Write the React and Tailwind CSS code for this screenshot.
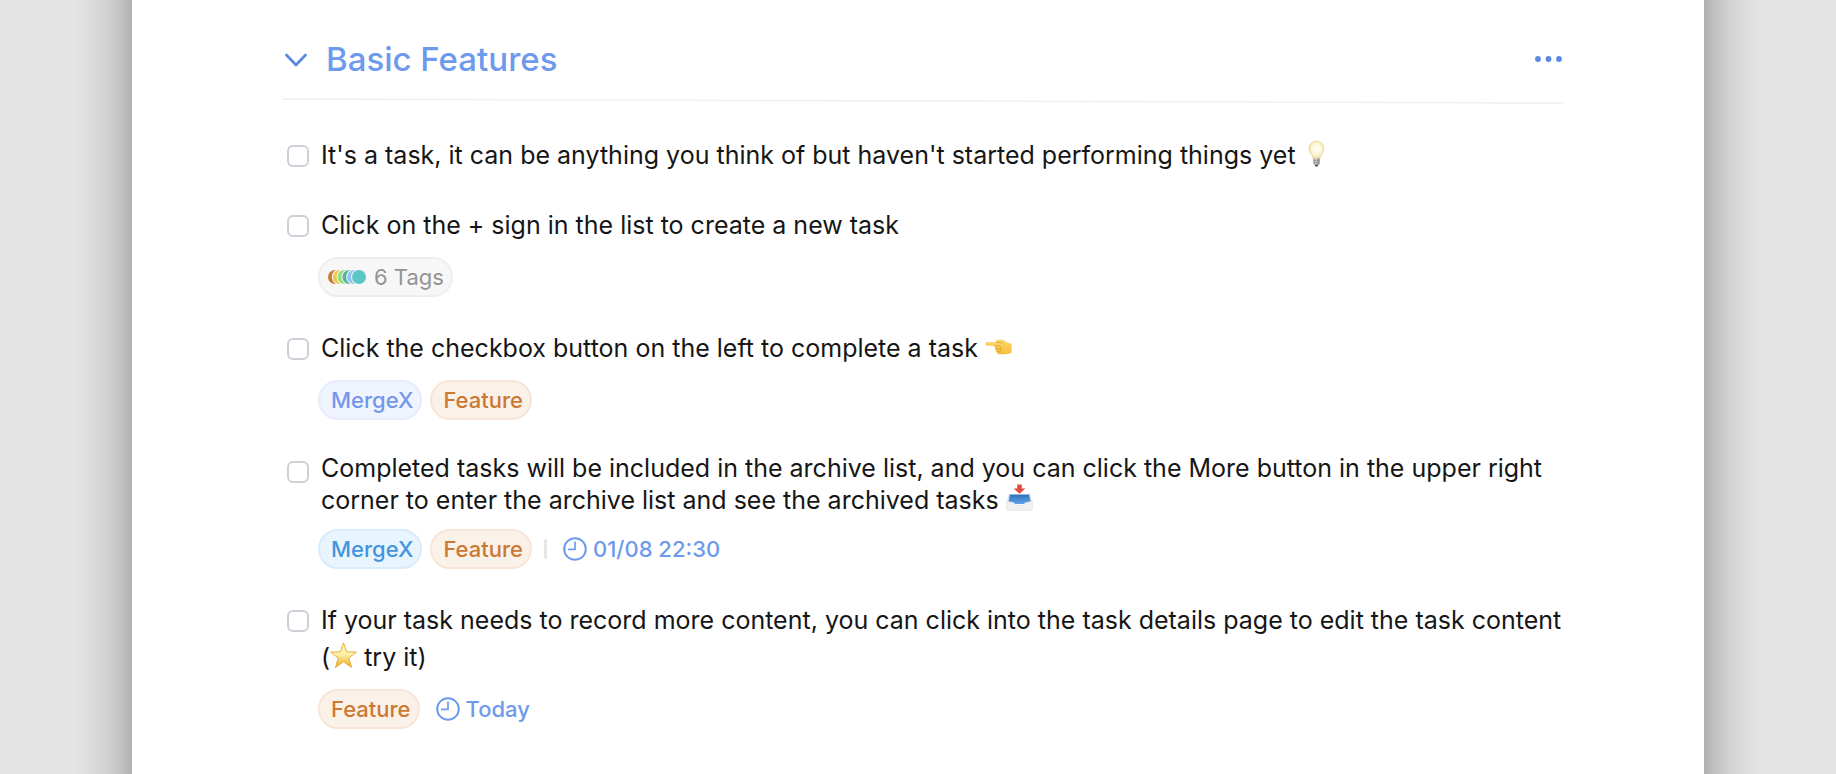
const tones = {
  blue: "bg-[#f0f4fe] border-[#e5ecfd] text-[#7397ea]",
  sky: "bg-[#e8f4fe] border-[#d8ecfb] text-[#4494df]",
  orange: "bg-[#faf1e9] border-[#f8e5d8] text-[#cb7832]",
};

function Chip({ tone, children }) {
  return (
    <span className={`flex h-10 items-center rounded-full border-2 pl-[11px] pr-[7px] text-[22px] font-medium ${tones[tone]}`}>
      {children}
    </span>
  );
}

function Due({ children }) {
  return (
    <span className="ml-2 flex items-center gap-1.5 text-[22px] font-medium text-[#6d9aec]">
      <svg className="size-6" viewBox="0 0 24 24" fill="none" stroke="currentColor" strokeWidth="2" aria-hidden="true">
        <circle cx="12" cy="12" r="10.8" />
        <path d="M12 5v7.4H5.8" strokeLinecap="round" strokeLinejoin="round" strokeWidth="1.7" />
      </svg>
      {children}
    </span>
  );
}

function Bulb() {
  return (
    <svg className="inline-block h-[27px] w-[27px] align-[-3px]" viewBox="0 0 27 27" role="img" aria-label="light bulb">
      <defs>
        <radialGradient id="glow" cx=".5" cy=".45" r=".6">
          <stop offset="0" stopColor="#fffef9" />
          <stop offset=".55" stopColor="#fdf6d4" />
          <stop offset="1" stopColor="#e6cf86" />
        </radialGradient>
        <linearGradient id="socket" x1="0" x2="1">
          <stop offset="0" stopColor="#8d8a86" />
          <stop offset=".4" stopColor="#dedbd6" />
          <stop offset="1" stopColor="#77716c" />
        </linearGradient>
      </defs>
      <path d="M13.500 1C9.200 1 6 4.200 6 8.500c0 4.600 3.700 6.500 4.300 10.500h6.400C17.300 15 21 13.100 21 8.500 21 4.200 17.800 1 13.500 1z" fill="url(#glow)" stroke="#e5d193" strokeWidth=".6" />
      <path d="M10.500 18.600h6v5c0 .8-.9 1.400-1.600 1.400h-2.800c-.8 0-1.600-.6-1.600-1.400z" fill="url(#socket)" />
      <path d="M10.500 20.800h6M10.500 22.900h6" stroke="#8a8580" strokeWidth=".6" />
      <path d="M11.700 24.800h3.600l-.9 1.600h-1.800z" fill="#3d3a38" />
    </svg>
  );
}

function PointLeft() {
  return (
    <svg className="inline-block h-[27px] w-[27px] align-[-5px]" viewBox="0 0 27 27" role="img" aria-label="pointing left">
      <defs>
        <linearGradient id="hand" x1="0" y1="0" x2="0" y2="1">
          <stop offset="0" stopColor="#ffd96a" />
          <stop offset="1" stopColor="#f6bd3c" />
        </linearGradient>
      </defs>
      <path d="M1.800 7.400c-1.600.2-1.600 2.700 0 2.900l8.600.7c-.8 1.200-.6 2.500.4 3-.4 1.200.1 2.300 1.200 2.700 0 1.400 1 2.300 2.500 2.300h5.200c1.800 0 2.600-.6 4.300-.8l2-.2c.5-3 .5-6.300-.1-9.300-2.100 0-3.300-.6-4.900-1.700-1.700-1.200-3-2-5.200-1.900l-3.500.2c-1.600.2-1.800 1.500-.8 2.200z" fill="url(#hand)" stroke="#eab23c" strokeWidth=".4" />
      <path d="M10.400 11h4.400c1.800.2 1.800 2.700.1 2.900h-4M12 16.700h2.700c1.500-.1 1.900-2 .7-2.800M11.500 7.300h3.500c1.400.1 2.600.9 3.200 1.800" fill="none" stroke="#d39a2c" strokeWidth=".7" strokeLinecap="round" />
    </svg>
  );
}

function Inbox() {
  return (
    <svg className="inline-block h-[27px] w-[27px] align-[-2px]" viewBox="0 0 27 27" role="img" aria-label="inbox tray">
      <defs>
        <linearGradient id="tray" x1="0" y1="0" x2="0" y2="1">
          <stop offset="0" stopColor="#2f6fb8" />
          <stop offset="1" stopColor="#5da5ee" />
        </linearGradient>
      </defs>
      <path d="M3 10.500h21L26 20H1z" fill="url(#tray)" />
      <path d="M3 10.500.5 18h1.800L4 11zM24 10.500l2.500 7.500h-1.800L23 11z" fill="#dfe6ee" />
      <path d="M.5 17.500h1.600l5.700 1.200c.7 0 .8 2.300 2 2.300h7.400c1.200 0 1.300-2.300 2-2.300l5.700-1.200h1.600V25c0 .8-.5 1.400-1.300 1.400H1.800C1 26.400.5 25.800.5 25z" fill="#f1f1f1" stroke="#dcdcdc" strokeWidth=".5" />
      <path d="M11.200.4h4.600v4h3.600l-5.900 5.400-5.900-5.400h3.600z" fill="#e5463f" />
    </svg>
  );
}

function Star() {
  return (
    <svg className="inline-block h-[27px] w-[27px] align-[-3px]" viewBox="0 0 27 27" role="img" aria-label="star">
      <defs>
        <linearGradient id="star" x1="0" y1="0" x2="0" y2="1">
          <stop offset="0" stopColor="#fdf0a0" />
          <stop offset=".45" stopColor="#fff3ae" />
          <stop offset="1" stopColor="#eda81c" />
        </linearGradient>
      </defs>
      <path d="M13.500.8l3.200 9 9.700.3-7.600 5.900 2.800 9.400-8.100-5.600-8.100 5.600 2.800-9.400L.6 10.100l9.700-.3z" fill="url(#star)" stroke="#e0a93a" strokeWidth=".9" strokeLinejoin="round" />
    </svg>
  );
}

const dots = ["#cb7832", "#ecc94f", "#8fe07c", "#5cb39a", "#8cc4f5", "#5cc5c6"];

function Task({ id, title, leading = "leading-[37px]", children }) {
  return (
    <li className="flex items-start gap-3">
      <input
        id={id}
        type="checkbox"
        className="mt-2 size-[22px] shrink-0 appearance-none rounded-md border-2 border-[#d0cfd8] bg-white checked:bg-[#6d9aec]"
      />
      <div className="min-w-0 flex-1">
        <label htmlFor={id} className={`block text-[25px] text-[#161616] ${leading}`}>
          {title}
        </label>
        {children && <div className="-ml-[3px] mt-[13px] flex items-center gap-2">{children}</div>}
      </div>
    </li>
  );
}

export default function App() {
  return (
    <div className="flex min-h-screen bg-[#e4e4e4] font-['Inter','Liberation_Sans',sans-serif]">
      <div className="w-[132px] shrink-0 bg-[linear-gradient(to_left,#b1b1b1,#c3c3c3_12px,#d1d1d1_25px,#dcdcdc_40px,#e4e4e4_58px)]" />
      <main className="min-w-0 flex-1 bg-white pl-[150px] pr-[140px] pt-10">
        <header className="flex h-10 items-center">
          <button aria-label="Collapse section" className="mr-4 flex w-7 justify-center text-[#5b8ae0]">
            <svg className="h-[14px] w-6" viewBox="0 0 24 14" fill="none" stroke="currentColor" strokeWidth="2.800" strokeLinecap="round" strokeLinejoin="round">
              <path d="M2.500 2l9.500 10L21.500 2" />
            </svg>
          </button>
          <h1 className="flex-1 text-[33px] font-medium text-[#6d9aec]">Basic Features</h1>
          <button aria-label="More" className="text-[#5b8ae0]">
            <svg className="h-6 w-8" viewBox="0 0 32 24" fill="currentColor">
              <circle cx="6" cy="11" r="2.900" />
              <circle cx="16.500" cy="11" r="2.900" />
              <circle cx="27" cy="11" r="2.900" />
            </svg>
          </button>
        </header>
        <svg className="mt-[18px] block h-[6px] w-full" viewBox="0 0 1282 6" preserveAspectRatio="none" aria-hidden="true">
          <path d="M0 1L1282 5" stroke="#f0f0f0" strokeWidth="1.500" />
        </svg>
        <ul className="flex flex-col gap-[33px] pl-[5px] pt-[33px]">
          <Task id="t1" title={<>It's a task, it can be anything you think of but haven't started performing things yet <Bulb /></>} />
          <Task id="t2" title="Click on the + sign in the list to create a new task">
            <span className="flex h-10 items-center gap-2 rounded-full border-2 border-[#eeeeee] bg-[#f7f7f7] pl-2 pr-[7px] text-[22px] text-[#949494]">
              <svg className="h-4 w-[38px]" viewBox="0 0 38 16" aria-hidden="true">
                {dots.map((c, i) => (
                  <g key={c}>
                    <circle cx={7 + i * 4.8} cy="8" r="8" fill="#f7f7f7" />
                    <circle cx={7 + i * 4.8} cy="8" r="7" fill={c} />
                  </g>
                ))}
              </svg>
              6 Tags
            </span>
          </Task>
          <Task id="t3" title={<>Click the checkbox button on the left to complete a task <PointLeft /></>}>
            <Chip tone="blue">MergeX</Chip>
            <Chip tone="orange">Feature</Chip>
          </Task>
          <Task id="t4" leading="leading-[31px]" title={<>Completed tasks will be included in the archive list, and you can click the More button in the upper right corner to enter the archive list and see the archived tasks <Inbox /></>}>
            <Chip tone="sky">MergeX</Chip>
            <Chip tone="orange">Feature</Chip>
            <span className="ml-1 h-5 w-[3px] rounded-full bg-[#e6e6e6]" aria-hidden="true" />
            <Due>01/08 22:30</Due>
          </Task>
          <Task id="t5" title={<>If your task needs to record more content, you can click into the task details page to edit the task content (<Star /> try it)</>}>
            <Chip tone="orange">Feature</Chip>
            <Due>Today</Due>
          </Task>
        </ul>
      </main>
      <div className="w-[132px] shrink-0 bg-[linear-gradient(to_right,#b1b1b1,#c3c3c3_12px,#d1d1d1_25px,#dcdcdc_40px,#e4e4e4_58px)]" />
    </div>
  );
}
